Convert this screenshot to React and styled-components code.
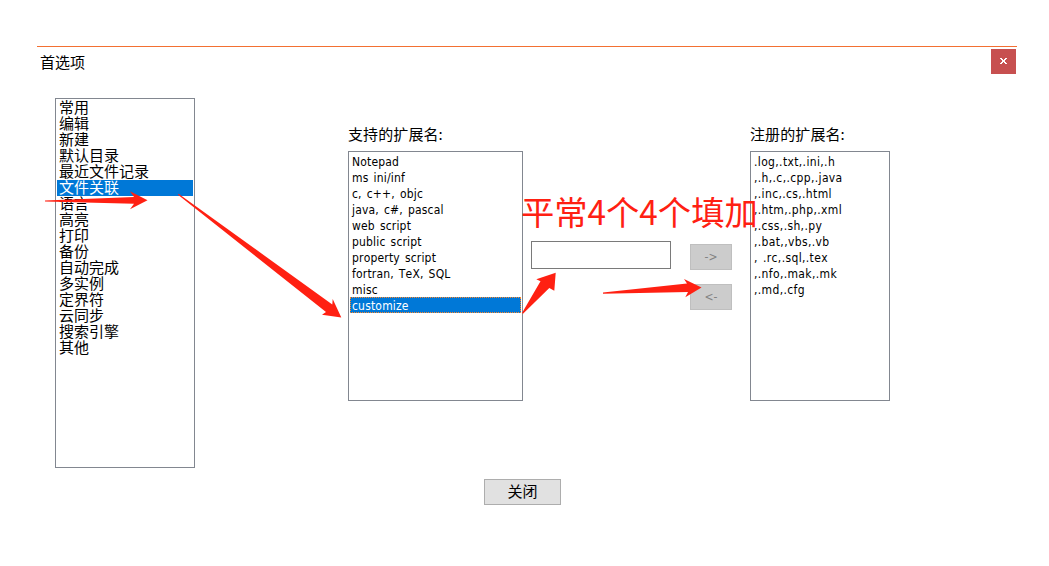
import React, { useState } from 'react';
import styled, { createGlobalStyle } from 'styled-components';

const categories = [
  '常用', '编辑', '新建', '默认目录', '最近文件记录', '文件关联', '语言', '高亮',
  '打印', '备份', '自动完成', '多实例', '定界符', '云同步', '搜索引擎', '其他',
];

const languages = [
  'Notepad', 'ms ini/inf', 'c, c++, objc', 'java, c#, pascal', 'web script',
  'public script', 'property script', 'fortran, TeX, SQL', 'misc', 'customize',
];

const registered = [
  '.log,.txt,.ini,.h',
  ',.h,.c,.cpp,.java',
  ',.inc,.cs,.html',
  ',.htm,.php,.xml',
  ',.css,.sh,.py',
  ',.bat,,vbs,.vb',
  ', .rc,.sql,.tex',
  ',.nfo,.mak,.mk',
  ',.md,.cfg',
];

function App() {
  const [category, setCategory] = useState(5);
  const [language, setLanguage] = useState(9);
  const [ext, setExt] = useState('');

  return (
    <Window>
      <GlobalStyle />
      <TitleBar>
        <Title>首选项</Title>
        <CloseBox aria-label="Close">
          <svg width="7" height="6" viewBox="0 0 7 6" shapeRendering="crispEdges">
            <path d="M0 0h2v1h-2zM5 0h2v1h-2zM1 1h2v1h-2zM4 1h2v1h-2zM2 2h3v2h-3zM1 4h2v1h-2zM4 4h2v1h-2zM0 5h2v1h-2zM5 5h2v1h-2z" fill="#fff" />
          </svg>
        </CloseBox>
      </TitleBar>
      <Body>
        <CategoryList>
          {categories.map((name, index) => (
            <CategoryRow key={name} $selected={index === category} onClick={() => setCategory(index)}>
              {name}
            </CategoryRow>
          ))}
        </CategoryList>
        <Field>
          <Label>支持的扩展名:</Label>
          <ListBox $width={175}>
            {languages.map((name, index) => (
              <Row key={name} $selected={index === language} onClick={() => setLanguage(index)}>
                {name}
              </Row>
            ))}
          </ListBox>
        </Field>
        <ExtInput value={ext} onChange={(e) => setExt(e.target.value)} />
        <MoveButtons>
          <MoveButton disabled>-&gt;</MoveButton>
          <MoveButton disabled>&lt;-</MoveButton>
        </MoveButtons>
        <Field>
          <Label>注册的扩展名:</Label>
          <ListBox $width={140}>
            {registered.map((line) => (
              <Row key={line} $spacing={0.36}>{line}</Row>
            ))}
          </ListBox>
        </Field>
      </Body>
      <Footer>
        <CloseButton>关闭</CloseButton>
      </Footer>
      <Arrows width="1049" height="566" viewBox="0 0 1049 566">
        <path d="M45 200.5L134 197L130 191.3L147.5 200.3L130 209.3L134 203.7L45 201.5Z" />
        <path d="M178.5 193.7L332.3 304.5L332.7 299L341.3 317.4L322 314.7L326 312L178 194.7Z" />
        <path d="M522 313L540.5 281.2L536.3 279.3L555.7 272.7L554.3 290.7L549.3 288L523 313.8Z" />
        <path d="M603 292.5L687 283.5L684 279L701.5 287.5L685.3 297.3L688 292L603 293.8Z" />
      </Arrows>
      <Note>平常4个4个填加</Note>
    </Window>
  );
}

export default App;

const GlobalStyle = createGlobalStyle`
  * {
    box-sizing: border-box;
  }

  body {
    margin: 0;
    background: #fff;
    color: #000;
    font-family: 'DejaVu Sans Condensed', 'Noto Sans CJK SC', sans-serif;
  }
`;

const Window = styled.div`
  position: relative;
  width: 1049px;
  height: 566px;
  padding: 46px 32px 0 37px;
  overflow: hidden;
`;

const TitleBar = styled.div`
  display: flex;
  justify-content: space-between;
  align-items: flex-start;
  height: 52px;
  padding: 2px 1px 0 3px;
  border-top: 1px solid #f37032;
`;

const Title = styled.div`
  padding-top: 3px;
  font-family: 'Noto Sans CJK SC', sans-serif;
  font-size: 15px;
  line-height: 20px;
`;

const CloseBox = styled.button`
  display: flex;
  align-items: center;
  justify-content: center;
  width: 25px;
  height: 25px;
  padding: 0 0 1px;
  border: none;
  background: #c75050;
`;

const Body = styled.div`
  display: flex;
  align-items: flex-start;
  height: 370px;
  padding-left: 18px;
`;

const CategoryList = styled.div`
  width: 140px;
  height: 370px;
  margin-right: 153px;
  padding: 1px;
  border: 1px solid #828790;
`;

const CategoryRow = styled.div`
  height: 16px;
  padding-left: 2px;
  font-family: 'Noto Sans CJK SC', sans-serif;
  font-size: 15px;
  line-height: 13px;
  white-space: nowrap;
  color: ${(props) => (props.$selected ? '#fff' : '#000')};
  background: ${(props) => (props.$selected ? '#0078d7' : 'transparent')};
`;

const Field = styled.div`
  padding-top: 26px;
`;

const Label = styled.div`
  height: 27px;
  font-family: 'Noto Sans CJK SC', sans-serif;
  font-size: 15px;
  line-height: 20px;
  letter-spacing: 0.1px;
`;

const ListBox = styled.div`
  width: ${(props) => props.$width}px;
  height: 250px;
  padding: 1px;
  border: 1px solid #828790;
`;

const Row = styled.div`
  height: 16px;
  padding-left: 2px;
  font-size: 12px;
  line-height: 19px;
  letter-spacing: ${(props) => props.$spacing || 0.18}px;
  word-spacing: 1.4px;
  font-kerning: none;
  white-space: pre;
  color: ${(props) => (props.$selected ? '#fff' : '#000')};
  background: ${(props) => (props.$selected ? '#0078d7' : 'transparent')};
  outline: ${(props) => (props.$selected ? '1px dotted #ff8728' : 'none')};
  outline-offset: -1px;
`;

const ExtInput = styled.input`
  width: 140px;
  height: 28px;
  margin: 143px 19px 0 8px;
  border: 1px solid #7a7a7a;
  border-radius: 0;
  outline: none;
  background: #fff;
`;

const MoveButtons = styled.div`
  display: flex;
  flex-direction: column;
  gap: 14px;
  margin: 146px 18px 0 0;
`;

const MoveButton = styled.button`
  width: 42px;
  height: 26px;
  padding: 0;
  border: 1px solid #bfbfbf;
  background: #ccc;
  color: #838383;
  font-family: 'DejaVu Sans Condensed', sans-serif;
  font-size: 12px;
`;

const Footer = styled.div`
  padding: 11px 0 0 447px;
`;

const CloseButton = styled.button`
  display: block;
  width: 77px;
  height: 26px;
  padding: 0 0 3px;
  border: 1px solid #adadad;
  background: #e1e1e1;
  color: #000;
  font-family: 'Noto Sans CJK SC', sans-serif;
  font-size: 15px;
`;

// red annotations drawn over the dialog
const Arrows = styled.svg`
  position: absolute;
  top: 0;
  left: 0;
  fill: #ff2012;
  pointer-events: none;
`;

const Note = styled.div`
  position: absolute;
  top: 187px;
  left: 521px;
  color: #ff2012;
  font-family: 'Noto Sans CJK SC', sans-serif;
  font-size: 33.3px;
  font-weight: 400;
  line-height: 48px;
  white-space: nowrap;
  pointer-events: none;
`;
